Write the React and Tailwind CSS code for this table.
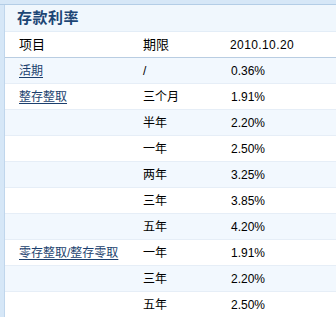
import React from 'react';

const rows = [
  { name: '活期', term: '/', rate: '0.36%' },
  { name: '整存整取', term: '三个月', rate: '1.91%' },
  { name: '', term: '半年', rate: '2.20%' },
  { name: '', term: '一年', rate: '2.50%' },
  { name: '', term: '两年', rate: '3.25%' },
  { name: '', term: '三年', rate: '3.85%' },
  { name: '', term: '五年', rate: '4.20%' },
  { name: '零存整取/整存零取', term: '一年', rate: '1.91%' },
  { name: '', term: '三年', rate: '2.20%' },
  { name: '', term: '五年', rate: '2.50%' },
];

const cjk = "font-['Liberation_Sans','Noto_Sans_CJK_SC',sans-serif]";

const App = () => {
  return (
    <div className={`w-[336px] h-[317px] overflow-hidden bg-white ${cjk} text-[12px] text-black`}>
      <div className="h-[5px] bg-[#d6e7f7] border-b border-[#b3cde6]" />
      <div className="flex">
        <div className="w-[5px] shrink-0 bg-[#d6e7f7] border-r border-[#c0d6ec]" />
        <div className="flex-1">
          <div className="h-[27px] bg-[#f0f7fd] flex items-center pl-[12px] border-b border-[#e3edf7]">
            <span className="text-[15px] font-bold text-[#1d4675] tracking-[0.5px]">存款利率</span>
          </div>
          <div className="h-[26px] flex items-center border-b border-[#b9cde2]">
            <span className="w-[138px] pl-[14px] text-[13px]">项目</span>
            <span className="w-[87px] text-[13px]">期限</span>
            <span className="tracking-[0.4px]">2010.10.20</span>
          </div>
          {rows.map((r, i) => (
            <div
              key={i}
              className={`h-[26px] flex items-center border-b border-[#e6eef7] ${i % 2 === 0 ? 'bg-[#f2f8fe]' : 'bg-white'}`}
            >
              <span className="w-[138px] pl-[14px]">
                {r.name && <a className="text-[#1b3f6e] underline underline-offset-2">{r.name}</a>}
              </span>
              <span className="w-[87px]">{r.term}</span>
              <span className="pl-[1px]">{r.rate}</span>
            </div>
          ))}
        </div>
      </div>
    </div>
  );
};

export default App;
